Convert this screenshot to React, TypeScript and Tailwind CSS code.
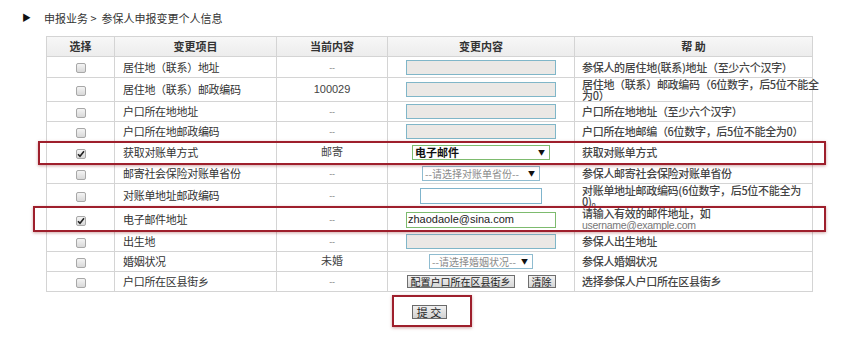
import React from 'react';

type Change =
  | { kind: 'grey' }
  | { kind: 'blank'; w: string }
  | { kind: 'email' }
  | { kind: 'select'; text: string; w: string; active?: boolean }
  | { kind: 'buttons' };

interface Row {
  checked: boolean;
  item: string;
  current: string;
  change: Change;
  help: React.ReactNode;
  h: string;
}

const rows: Row[] = [
  { checked: false, item: '居住地（联系）地址', current: '--', change: { kind: 'grey' }, help: '参保人的居住地(联系)地址（至少六个汉字）', h: 'h-[21px]' },
  { checked: false, item: '居住地（联系）邮政编码', current: '100029', change: { kind: 'grey' }, help: (<>居住地（联系）邮政编码（6位数字，后5位不能全<br />为0）</>), h: 'h-[24px]' },
  { checked: false, item: '户口所在地地址', current: '--', change: { kind: 'grey' }, help: '户口所在地地址（至少六个汉字）', h: 'h-[20px]' },
  { checked: false, item: '户口所在地邮政编码', current: '--', change: { kind: 'grey' }, help: '户口所在地邮编（6位数字，后5位不能全为0）', h: 'h-[20px]' },
  { checked: true, item: '获取对账单方式', current: '邮寄', change: { kind: 'select', text: '电子邮件', w: 'w-[138px]', active: true }, help: '获取对账单方式', h: 'h-[22px]' },
  { checked: false, item: '邮寄社会保险对账单省份', current: '--', change: { kind: 'select', text: '--请选择对账单省份--', w: 'w-[118px]' }, help: '参保人邮寄社会保险对账单省份', h: 'h-[20px]' },
  { checked: false, item: '对账单地址邮政编码', current: '--', change: { kind: 'blank', w: 'w-[122px]' }, help: (<>对账单地址邮政编码(6位数字，后5位不能全为<br />0)。</>), h: 'h-[24px]' },
  { checked: true, item: '电子邮件地址', current: '--', change: { kind: 'email' }, help: (<>请输入有效的邮件地址，如<br /><span className="text-[10.5px] text-[#777] font-normal" style={{ fontFamily: '"Liberation Sans", sans-serif' }}>username@example.com</span></>), h: 'h-[24px]' },
  { checked: false, item: '出生地', current: '--', change: { kind: 'grey' }, help: '参保人出生地址', h: 'h-[20px]' },
  { checked: false, item: '婚姻状况', current: '未婚', change: { kind: 'select', text: '--请选择婚姻状况--', w: 'w-[104px]' }, help: '参保人婚姻状况', h: 'h-[20px]' },
  { checked: false, item: '户口所在区县街乡', current: '--', change: { kind: 'buttons' }, help: '选择参保人户口所在区县街乡', h: 'h-[20px]' },
];

const latin = { fontFamily: '"Liberation Sans", "Noto Sans CJK SC", sans-serif' };

const CheckBox: React.FC<{ checked: boolean }> = ({ checked }) => (
  <span className="inline-flex w-[10px] h-[10px] items-center justify-center border border-[#a8a8a8] rounded-[2px] bg-gradient-to-b from-[#f4f4f4] to-[#d8d8d8] align-middle">
    {checked && (
      <svg width="8" height="8" viewBox="0 0 8 8">
        <path d="M1 4.2 L3 6.3 L7 1.3" fill="none" stroke="#222" strokeWidth="1.6" />
      </svg>
    )}
  </span>
);

const ChangeCell: React.FC<{ c: Change }> = ({ c }) => {
  if (c.kind === 'grey') {
    return <div className="mx-auto w-[150px] h-[15px] bg-[#ebe8e5] border border-[#80b6c8]" />;
  }
  if (c.kind === 'blank') {
    return <div className={`mx-auto ${c.w} h-[16px] bg-white border border-[#7fb4cc]`} />;
  }
  if (c.kind === 'email') {
    return (
      <div
        className="mx-auto w-[150px] h-[16px] bg-white border border-[#7dbb6e] flex items-center pl-[1px] text-[11px] text-[#222] leading-none"
        style={latin}
      >
        zhaodaole@sina.com
      </div>
    );
  }
  if (c.kind === 'select') {
    return (
      <div
        className={`mx-auto ${c.w} h-[15px] bg-white border flex items-center justify-between pl-[2px] pr-[4px] leading-none whitespace-nowrap overflow-hidden ${
          c.active ? 'border-[#7dbb6e] text-[#111] font-bold text-[11px]' : 'border-[#8fbcd0] text-[#8a8a8a] text-[10px]'
        }`}
      >
        <span>{c.text}</span>
        <span className="text-[7px] text-[#111]">▼</span>
      </div>
    );
  }
  return (
    <div className="flex items-center justify-center gap-[13px]">
      <span className="px-[3px] h-[13px] flex items-center border border-[#6e6e6e] bg-gradient-to-b from-[#f2f2f2] to-[#d6d6d6] text-[10px] text-[#222] leading-none whitespace-nowrap">配置户口所在区县街乡</span>
      <span className="px-[3px] h-[13px] flex items-center border border-[#6e6e6e] bg-gradient-to-b from-[#f2f2f2] to-[#d6d6d6] text-[10px] text-[#222] leading-none whitespace-nowrap">清除</span>
    </div>
  );
};

const App: React.FC = () => {
  return (
    <div
      className="relative w-[841px] h-[348px] bg-white overflow-hidden text-[#333]"
      style={{ fontFamily: '"Noto Sans CJK SC", "Liberation Sans", sans-serif' }}
    >
      <div className="flex items-center h-[20px] mt-[8px] pl-[22px]">
        <span className="text-[9px] text-[#111] w-[22px]">▶</span>
        <span className="text-[11px] text-[#333] whitespace-pre">申报业务 &gt;  参保人申报变更个人信息</span>
      </div>

      <table className="ml-[46px] mt-[8px] w-[766px] table-fixed border-collapse text-[11px] tracking-[-0.3px]">
        <colgroup>
          <col className="w-[68px]" />
          <col className="w-[162px]" />
          <col className="w-[111px]" />
          <col className="w-[187px]" />
          <col className="w-[238px]" />
        </colgroup>
        <thead>
          <tr className="h-[20px] bg-gradient-to-b from-[#f7f7f7] to-[#ececec]">
            {['选择', '变更项目', '当前内容', '变更内容', '帮 助'].map((t) => (
              <th key={t} className="border border-[#d4d4d4] font-bold text-[11px] text-[#333] p-0 leading-none tracking-normal">
                {t}
              </th>
            ))}
          </tr>
        </thead>
        <tbody>
          {rows.map((r) => (
            <tr key={r.item} className={r.h}>
              <td className="border border-[#d4d4d4] text-center p-0 leading-none">
                <CheckBox checked={r.checked} />
              </td>
              <td className="border border-[#d4d4d4] pl-[8px] py-0 pr-0 text-[#333] leading-none whitespace-nowrap">{r.item}</td>
              <td className="border border-[#d4d4d4] text-center p-0 text-[#444] leading-none" style={latin}>
                {r.current === '--' ? <span className="text-[9px] text-[#888]">--</span> : <span className="text-[11px] tracking-normal">{r.current}</span>}
              </td>
              <td className="border border-[#d4d4d4] p-0 tracking-normal">
                <ChangeCell c={r.change} />
              </td>
              <td className="border border-[#d4d4d4] pl-[7px] pr-0 py-0 text-[#444] font-medium leading-[11px] whitespace-nowrap">{r.help}</td>
            </tr>
          ))}
        </tbody>
      </table>

      <div className="flex justify-center w-[766px] ml-[46px] mt-[13px]">
        <span className="w-[35px] h-[14px] flex items-center justify-center border border-[#6a6a6a] bg-gradient-to-b from-[#f0f0f0] to-[#d2d2d2] text-[11px] text-[#222] leading-none whitespace-pre">
          提 交
        </span>
      </div>

      {/* annotation boxes */}
      <div className="absolute left-[38px] top-[141px] w-[788px] h-[24px] border-2 border-[#9e1f2c] shadow-[0_1px_3px_rgba(120,0,0,0.35)] pointer-events-none" />
      <div className="absolute left-[33px] top-[206px] w-[793px] h-[26px] border-2 border-[#9e1f2c] shadow-[0_1px_3px_rgba(120,0,0,0.35)] pointer-events-none" />
      <div className="absolute left-[392px] top-[295px] w-[80px] h-[32px] border-2 border-[#9e1f2c] shadow-[0_1px_3px_rgba(120,0,0,0.35)] pointer-events-none" />
    </div>
  );
};

export default App;
